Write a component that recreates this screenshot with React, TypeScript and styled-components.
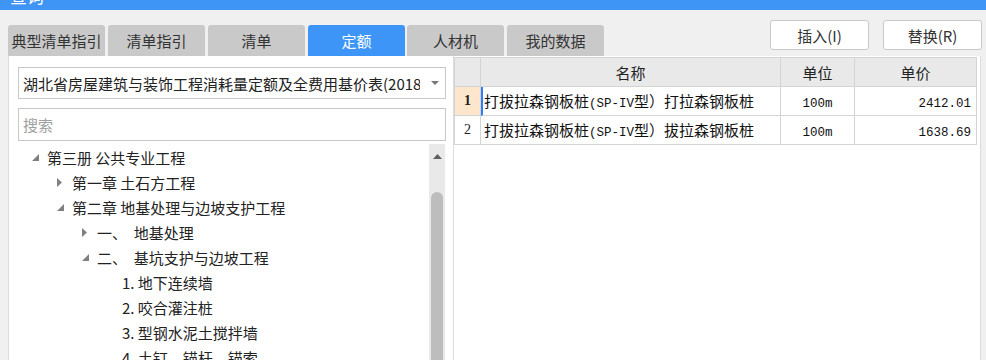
import React from "react";
import styled, { createGlobalStyle } from "styled-components";

const Global = createGlobalStyle`
  html, body { margin: 0; padding: 0; background: #f0f0f0; overflow: hidden; }
  body { font-family: "Noto Sans CJK SC", "Noto Sans", sans-serif; color: #222; }
  * { box-sizing: border-box; }
`;

const Page = styled.div`
  width: 986px;
  height: 360px;
  display: flex;
  flex-direction: column;
  background: #f0f0f0;
`;

const TitleBar = styled.div`
  height: 10px;
  background: #3f95f6;
  overflow: hidden;
  padding-left: 10px;
`;

const TitleText = styled.div`
  color: #fff;
  font-size: 17px;
  line-height: 17px;
  margin-top: -13px;
`;

const TopRow = styled.div`
  height: 46px;
  display: flex;
  align-items: flex-start;
  padding-left: 8px;
  padding-right: 4px;
`;

const Tabs = styled.div`
  display: flex;
  align-self: flex-end;
  gap: 2px;
`;

const Tab = styled.div<{ $active?: boolean; $w: number }>`
  width: ${(p) => p.$w}px;
  height: 31px;
  margin-right: ${(p) => (p.$active ? 0 : 1)}px;
  border-radius: 3px 3px 0 0;
  background: ${(p) => (p.$active ? "#3d95f7" : "#c9c9c9")};
  color: ${(p) => (p.$active ? "#fff" : "#333")};
  font-size: 15px;
  line-height: 31px;
  text-align: center;
  white-space: nowrap;
`;

const Buttons = styled.div`
  margin-left: auto;
  margin-top: 10px;
  display: flex;
  gap: 14px;
`;

const Button = styled.button`
  width: 99px;
  height: 30px;
  background: #fff;
  border: 1px solid #c9c9c9;
  border-radius: 3px;
  font-family: "Noto Sans CJK SC", "Noto Sans", sans-serif;
  font-size: 15px;
  color: #333;
  padding: 0;
`;

const Main = styled.div`
  flex: 1;
  display: flex;
  padding-left: 8px;
  padding-right: 5px;
  min-height: 0;
`;

const LeftPanel = styled.div`
  width: 446px;
  background: #fff;
  border-left: 1px solid #dcdcdc;
  border-right: 1px solid #dcdcdc;
  display: flex;
  flex-direction: column;
  padding: 11px 7px 0 9px;
  gap: 9px;
`;

const Select = styled.div`
  height: 32px;
  border: 1px solid #c9c9c9;
  display: flex;
  align-items: center;
  padding: 0 8px 0 4px;
  font-size: 15px;
  color: #222;
  white-space: nowrap;
  overflow: hidden;
`;

const SelectText = styled.span`
  width: 397px;
  flex: none;
  overflow: hidden;
`;

const Caret = styled.span`
  width: 0;
  height: 0;
  border-left: 4px solid transparent;
  border-right: 4px solid transparent;
  border-top: 4px solid #777;
  margin-left: 11px;
`;

const Search = styled.div`
  height: 33px;
  border: 1px solid #c9c9c9;
  display: flex;
  align-items: center;
  padding-left: 4px;
  font-size: 15px;
  color: #a0a0a0;
`;

const TreeArea = styled.div`
  flex: 1;
  display: flex;
  margin-top: -6px;
  overflow: hidden;
`;

const TreeList = styled.div`
  flex: 1;
  padding-top: 1px;
`;

const TreeRow = styled.div<{ $level: number }>`
  height: 25px;
  display: flex;
  align-items: center;
  padding-left: ${(p) => 11 + p.$level * 25}px;
  font-size: 15px;
  color: #222;
  white-space: nowrap;
`;

const ArrowBox = styled.span`
  width: 18px;
  height: 25px;
  display: flex;
  align-items: center;
  padding-left: 3px;
`;

const ScrollBar = styled.div`
  width: 16px;
  background: #e9e9e9;
  display: flex;
  flex-direction: column;
  align-items: center;
  margin-right: 1px;
`;

const ScrollUp = styled.div`
  height: 16px;
  display: flex;
  align-items: center;
  justify-content: center;
  margin-top: 4px;
`;

const Thumb = styled.div`
  width: 12px;
  flex: 1;
  margin-top: 28px;
  background: #bdbdbd;
  border-radius: 6px 6px 0 0;
`;

const RightPanel = styled.div`
  flex: 1;
  background: #fff;
  border-right: 1px solid #dcdcdc;
  padding: 1px 3px 0 0;
`;

const Table = styled.div`
  display: grid;
  grid-template-columns: 26px 300px 74px 122px;
  border-top: 1px solid #d4d4d4;
  border-left: 1px solid #d4d4d4;
`;

const HeadCell = styled.div`
  height: 29px;
  background: #e9e9e9;
  border-right: 1px solid #d4d4d4;
  border-bottom: 1px solid #d4d4d4;
  display: flex;
  align-items: center;
  justify-content: center;
  font-size: 15px;
  color: #222;
`;

const NumCell = styled.div<{ $current?: boolean }>`
  height: 29px;
  background: ${(p) => (p.$current ? "#fde6cc" : "#fff")};
  border-right: 1px solid #d4d4d4;
  border-bottom: 1px solid #d4d4d4;
  display: flex;
  align-items: center;
  justify-content: center;
  font-family: "Liberation Serif", "Noto Sans CJK SC", serif;
  font-weight: ${(p) => (p.$current ? 700 : 400)};
  font-size: 14px;
  color: #222;
`;

const Cell = styled.div<{ $align?: string; $current?: boolean }>`
  height: 29px;
  background: #fff;
  border-right: 1px solid #d4d4d4;
  border-bottom: 1px solid #d4d4d4;
  border-left: ${(p) => (p.$current ? "2px solid #2f7ef5" : "none")};
  text-align: ${(p) => p.$align || "left"};
  line-height: 28px;
  padding: 0 ${(p) => (p.$align === "right" ? 5 : 3)}px 0 ${(p) => (p.$current ? 1 : 3)}px;
  font-size: 15px;
  color: #111;
  white-space: nowrap;
`;

const Latin = styled.span`
  font-family: "Liberation Mono", "DejaVu Sans Mono", monospace;
  font-size: 12.5px;
`;

const Expanded = () => (
  <svg width="7" height="7" viewBox="0 0 7 7">
    <polygon points="7,0 7,7 0,7" fill="#808080" />
  </svg>
);

const Collapsed = () => (
  <svg width="5" height="9" viewBox="0 0 5 9">
    <polygon points="0,0 5,4.5 0,9" fill="#808080" />
  </svg>
);

type Node = { level: number; text: string; state?: "open" | "closed" };

const tree: Node[] = [
  { level: 0, text: "第三册 公共专业工程", state: "open" },
  { level: 1, text: "第一章 土石方工程", state: "closed" },
  { level: 1, text: "第二章 地基处理与边坡支护工程", state: "open" },
  { level: 2, text: "一、\u00a0\u00a0地基处理", state: "closed" },
  { level: 2, text: "二、\u00a0\u00a0基坑支护与边坡工程", state: "open" },
  { level: 3, text: "1. 地下连续墙" },
  { level: 3, text: "2. 咬合灌注桩" },
  { level: 3, text: "3. 型钢水泥土搅拌墙" },
  { level: 3, text: "4. 土钉、锚杆、锚索" },
];

const tabs = [
  { label: "典型清单指引", w: 97 },
  { label: "清单指引", w: 97 },
  { label: "清单", w: 97 },
  { label: "定额", w: 97, active: true },
  { label: "人材机", w: 97 },
  { label: "我的数据", w: 97 },
];

const rows = [
  { n: "1", a: "打拉森钢板桩", unit: "100m", price: "2412.01", current: true },
  { n: "2", a: "拔拉森钢板桩", unit: "100m", price: "1638.69" },
];

export default function App() {
  return (
    <Page>
      <Global />
      <TitleBar>
        <TitleText>查询</TitleText>
      </TitleBar>
      <TopRow>
        <Tabs>
          {tabs.map((t) => (
            <Tab key={t.label} $active={t.active} $w={t.w}>
              {t.label}
            </Tab>
          ))}
        </Tabs>
        <Buttons>
          <Button>插入(I)</Button>
          <Button>替换(R)</Button>
        </Buttons>
      </TopRow>
      <Main>
        <LeftPanel>
          <Select>
            <SelectText>湖北省房屋建筑与装饰工程消耗量定额及全费用基价表(2018)</SelectText>
            <Caret />
          </Select>
          <Search>搜索</Search>
          <TreeArea>
            <TreeList>
              {tree.map((n, i) => (
                <TreeRow key={i} $level={n.level}>
                  <ArrowBox>
                    {n.state === "open" && <Expanded />}
                    {n.state === "closed" && <Collapsed />}
                  </ArrowBox>
                  {n.text}
                </TreeRow>
              ))}
            </TreeList>
            <ScrollBar>
              <ScrollUp>
                <svg width="9" height="5" viewBox="0 0 9 5">
                  <polygon points="0,5 4.5,0 9,5" fill="#606060" />
                </svg>
              </ScrollUp>
              <Thumb />
            </ScrollBar>
          </TreeArea>
        </LeftPanel>
        <RightPanel>
          <Table>
            <HeadCell />
            <HeadCell>名称</HeadCell>
            <HeadCell>单位</HeadCell>
            <HeadCell>单价</HeadCell>
            {rows.map((r) => (
              <React.Fragment key={r.n}>
                <NumCell $current={r.current}>{r.n}</NumCell>
                <Cell $current={r.current}>
                  打拔拉森钢板桩<Latin>(SP-IV</Latin>型）{r.a}
                </Cell>
                <Cell $align="center">
                  <Latin>{r.unit}</Latin>
                </Cell>
                <Cell $align="right">
                  <Latin>{r.price}</Latin>
                </Cell>
              </React.Fragment>
            ))}
          </Table>
        </RightPanel>
      </Main>
    </Page>
  );
}
